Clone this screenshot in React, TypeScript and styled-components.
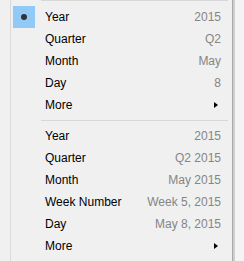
import React from 'react';
import styled, {createGlobalStyle} from 'styled-components';

const GlobalStyle = createGlobalStyle`
    html, body {
        margin: 0;
        padding: 0;
        background: #f0f0f0;
    }
`;

const Page = styled.div`
    width: 244px;
    height: 261px;
    display: flex;
    background: #f0f0f0;
    font-family: 'Liberation Sans', Arial, sans-serif;
    font-size: 12px;
    overflow: hidden;
`;

const Menu = styled.div`
    width: 222px;
    margin-left: 10px;
    border-left: 1px solid #dadada;
    display: flex;
    flex-direction: column;
`;

const Edge = styled.div`
    width: 11px;
    border-left: 1px solid #a9a9a9;
    box-shadow: inset 2px 0 0 #cfcfcf;
    background: #f4f4f4;
`;

const Separator = styled.div<{$top?: boolean}>`
    height: 1px;
    background: #d7d7d7;
    margin: ${({$top}) => ($top ? '0 4px 5px 30px' : '4px 4px 4px 30px')};
`;

const Row = styled.div`
    height: 22px;
    display: flex;
    align-items: center;
    padding-right: 11px;
    color: #000;
`;

const Check = styled.div<{$on?: boolean}>`
    width: 22px;
    height: 22px;
    margin-left: 2px;
    display: flex;
    align-items: center;
    justify-content: center;
    background: ${({$on}) => ($on ? '#91c9f7' : 'transparent')};
`;

const Dot = styled.span`
    width: 6px;
    height: 6px;
    border-radius: 50%;
    background: #333;
`;

const Label = styled.span`
    flex: 1;
    padding-left: 10px;
    white-space: nowrap;
`;

const Value = styled.span`
    color: #858585;
    white-space: nowrap;
`;

const Arrow = styled.span`
    width: 0;
    height: 0;
    margin-right: 3px;
    border-top: 3.5px solid transparent;
    border-bottom: 3.5px solid transparent;
    border-left: 4px solid #000;
`;

type Item = {label: string; value?: string; sub?: boolean; checked?: boolean};

const top: Item[] = [
    {label: 'Year', value: '2015', checked: true},
    {label: 'Quarter', value: 'Q2'},
    {label: 'Month', value: 'May'},
    {label: 'Day', value: '8'},
    {label: 'More', sub: true}
];

const bottom: Item[] = [
    {label: 'Year', value: '2015'},
    {label: 'Quarter', value: 'Q2 2015'},
    {label: 'Month', value: 'May 2015'},
    {label: 'Week Number', value: 'Week 5, 2015'},
    {label: 'Day', value: 'May 8, 2015'},
    {label: 'More', sub: true}
];

const MenuRow = ({item}: {item: Item}) => (
    <Row>
        <Check $on={item.checked}>{item.checked && <Dot />}</Check>
        <Label>{item.label}</Label>
        {item.sub ? <Arrow /> : <Value>{item.value}</Value>}
    </Row>
);

export default function App() {
    return (
        <>
            <GlobalStyle />
            <Page>
                <Menu>
                    <Separator $top />
                    {top.map((item, i) => (
                        <MenuRow key={i} item={item} />
                    ))}
                    <Separator />
                    {bottom.map((item, i) => (
                        <MenuRow key={i} item={item} />
                    ))}
                </Menu>
                <Edge />
            </Page>
        </>
    );
}
